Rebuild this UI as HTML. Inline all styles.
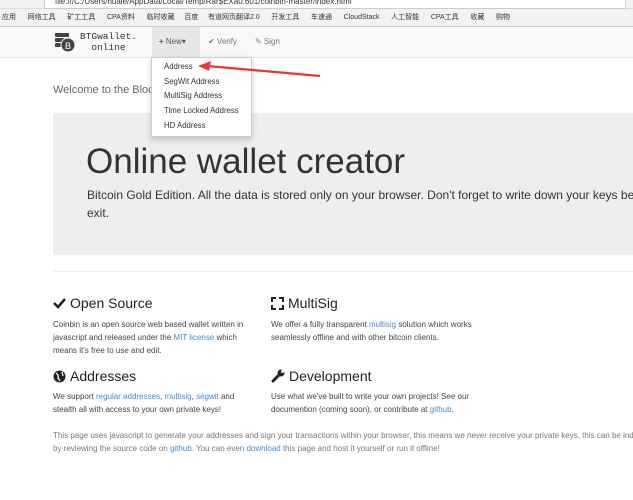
<!DOCTYPE html>
<html><head><meta charset="utf-8"><style>
body{margin:0;width:633px;height:500px;overflow:hidden;background:#fff;font-family:"Liberation Sans","Noto Sans CJK SC",sans-serif;color:#333;position:relative}
.a{position:absolute;white-space:nowrap}
a{color:#428bca;text-decoration:none}
.p{font-size:8px;line-height:13px;color:#444}
h3{margin:0;font-weight:normal;font-size:14px;color:#222;display:flex;align-items:center;gap:4px}
</style></head><body>
<div class="a" style="left:0;top:0;width:633px;height:8px;background:#f2f2f2;border-bottom:1px solid #ddd"></div>
<div class="a" style="left:44px;top:-4px;width:570px;height:11px;background:#fff;border:1px solid #ccc;font-size:8px;color:#333;padding-left:10px;overflow:hidden">file:///C:/Users/huale/AppData/Local/Temp/Rar$EXa0.601/coinbin-master/index.html</div>
<div class="a" style="left:0;top:9px;width:633px;height:17px;background:#f2f2f2;border-bottom:1px solid #ccc;font-size:7px;line-height:17px;color:#333;overflow:hidden">
&nbsp;应用 &nbsp;&nbsp;&nbsp;&nbsp;&nbsp;网络工具 &nbsp;&nbsp;&nbsp;&nbsp;&nbsp;矿工工具 &nbsp;&nbsp;&nbsp;&nbsp;&nbsp;CPA资料 &nbsp;&nbsp;&nbsp;&nbsp;&nbsp;临时收藏 &nbsp;&nbsp;&nbsp;&nbsp;百度 &nbsp;&nbsp;&nbsp;&nbsp;有道网页翻译2.0 &nbsp;&nbsp;&nbsp;&nbsp;&nbsp;开发工具 &nbsp;&nbsp;&nbsp;&nbsp;&nbsp;车速通 &nbsp;&nbsp;&nbsp;&nbsp;&nbsp;CloudStack &nbsp;&nbsp;&nbsp;&nbsp;&nbsp;人工智能 &nbsp;&nbsp;&nbsp;&nbsp;&nbsp;CPA工具 &nbsp;&nbsp;&nbsp;&nbsp;&nbsp;收藏 &nbsp;&nbsp;&nbsp;&nbsp;&nbsp;购物</div>
<div class="a" style="left:0;top:27px;width:633px;height:30px;background:#f8f8f8;border-bottom:1px solid #e7e7e7"></div>
<svg class="a" style="left:54px;top:31px" width="22" height="22"><rect x="1" y="2" width="14" height="4" rx="1" fill="#444"/><rect x="1" y="7" width="14" height="4" rx="1" fill="#444"/><rect x="1" y="12" width="14" height="4" rx="1" fill="#444"/><circle cx="14" cy="14" r="7" fill="#444" stroke="#f8f8f8" stroke-width="1"/><text x="11" y="18" font-size="9" fill="#fff" font-family="Liberation Sans">B</text></svg>
<div class="a" style="left:80px;top:31px;font-family:'Liberation Mono',monospace;font-size:9.5px;line-height:11px;color:#333;text-align:center">BTGwallet.<br>online</div>
<div class="a" style="left:152px;top:27px;width:48px;height:30px;background:#e7e7e7"></div>
<div class="a" style="left:159px;top:37px;font-size:8px;color:#555"><b>+</b> New▾</div>
<div class="a" style="left:208px;top:37px;font-size:8px;color:#777">✔ Verify</div>
<div class="a" style="left:255px;top:37px;font-size:8px;color:#777">✎ Sign</div>
<div class="a" style="left:53px;top:84px;font-size:11px;color:#666">Welcome to the Bloc</div>
<div class="a" style="left:53px;top:113px;width:580px;height:142px;background:#eee"></div>
<div class="a" style="left:86px;top:142px;font-size:35px;color:#333">Online wallet creator</div>
<div class="a" style="left:87px;top:186px;font-size:12px;line-height:18px;color:#333;width:546px;overflow:hidden">Bitcoin Gold Edition. All the data is stored only on your browser. Don't forget to write down your keys befo<br>exit.</div>
<div class="a" style="left:151px;top:57px;width:99px;height:76px;background:#fff;border:1px solid #ccc;box-shadow:0 3px 6px rgba(0,0,0,.18);font-size:7.8px;line-height:14.7px;color:#333;padding-top:2px">
<div style="padding-left:12px">Address</div><div style="padding-left:12px">SegWit Address</div><div style="padding-left:12px">MultiSig Address</div><div style="padding-left:12px">Time Locked Address</div><div style="padding-left:12px">HD Address</div></div>
<svg class="a" style="left:195px;top:58px" width="130" height="22"><line x1="125" y1="18" x2="12" y2="8" stroke="#e33" stroke-width="2.2"/><polygon points="3,8 16,3 14,13" fill="#e33"/></svg>
<div class="a" style="left:53px;top:271px;width:580px;border-top:1px solid #eee"></div>
<div class="a" style="left:53px;top:295px"><h3><svg width="13" height="12"><path d="M1 6 L5 10 L12 2" stroke="#222" stroke-width="2.6" fill="none"/></svg>Open Source</h3></div>
<div class="a p" style="left:53px;top:318px">Coinbin is an open source web based wallet written in<br>javascript and released under the <a>MIT license</a> which<br>means it's free to use and edit.</div>
<div class="a" style="left:271px;top:295px"><h3><svg width="13" height="13"><g stroke="#222" stroke-width="2" fill="none"><path d="M1 5V1H5M8 1H12V5M12 8V12H8M5 12H1V8"/></g></svg>MultiSig</h3></div>
<div class="a p" style="left:271px;top:318px">We offer a fully transparent <a>multisig</a> solution which works<br>seamlessly offline and with other bitcoin clients.</div>
<div class="a" style="left:53px;top:368px"><h3><svg width="13" height="13"><circle cx="6.5" cy="6.5" r="6" fill="#222"/><path d="M3 3 Q6 5 5 8 L7 11 M9 2 L10 6" stroke="#fff" stroke-width="1.3" fill="none"/></svg>Addresses</h3></div>
<div class="a p" style="left:53px;top:390px">We support <a>regular addresses</a>, <a>multisig</a>, <a>segwit</a> and<br>stealth all with access to your own private keys!</div>
<div class="a" style="left:271px;top:368px"><h3><svg width="14" height="14"><path d="M2 12 L8 6" stroke="#222" stroke-width="3" stroke-linecap="round"/><circle cx="10" cy="4" r="3.5" fill="#222"/><circle cx="11.5" cy="2.5" r="1.5" fill="#fff"/></svg>Development</h3></div>
<div class="a p" style="left:271px;top:390px">Use what we've built to write your own projects! See our<br>documention (coming soon), or contribute at <a>github</a>.</div>
<div class="a p" style="left:53px;top:429px;color:#777;width:580px;overflow:hidden">This page uses javascript to generate your addresses and sign your transactions within your browser, this means we <i>never</i> receive your private keys, this can be indep<br>by reviewing the source code on <a>github</a>. You can even <a>download</a> this page and host it yourself or run it offline!</div>
</body></html>
